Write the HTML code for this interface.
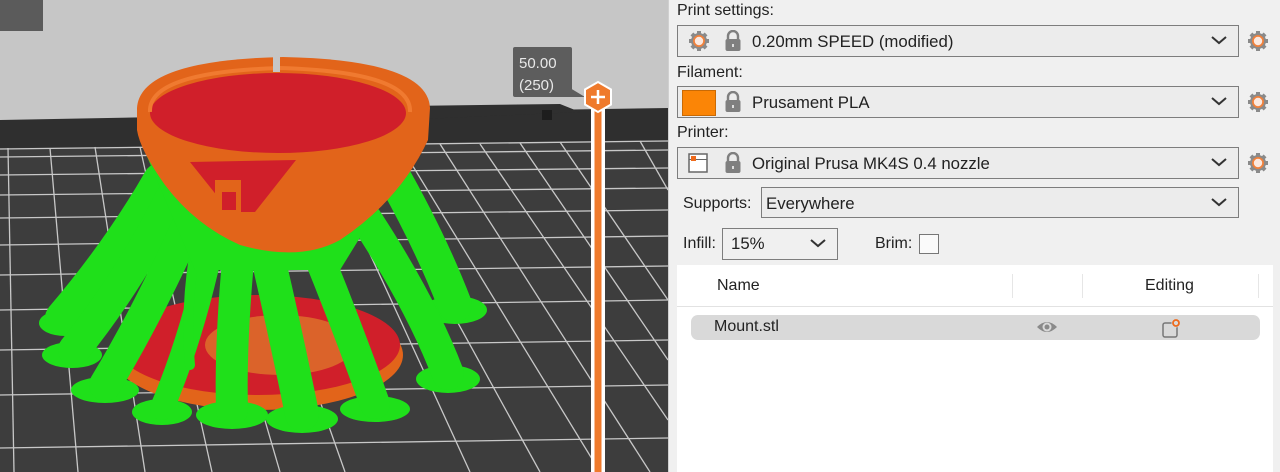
<!DOCTYPE html>
<html><head><meta charset="utf-8"><style>
body{margin:0;width:1280px;height:472px;overflow:hidden;font-family:"Liberation Sans",sans-serif;background:#f2f2f2;position:relative}
.v{position:absolute;left:0;top:0;width:668px;height:472px;overflow:hidden}
.p{position:absolute;left:668px;top:0;width:612px;height:472px;background:#f0f0f0;border-left:1px solid #d0d0d0}
.lbl{position:absolute;font-size:16px;color:#222}
.cb{position:absolute;height:30px;border:1px solid #7d7d7d;background:#ececec;box-sizing:border-box;font-size:16.8px;color:#222}
.cb span{position:absolute;top:6px}
.chev{position:absolute;right:10px;top:10px}
.gear{position:absolute}
</style></head><body>
<div class="v">
<svg width="668" height="472" viewBox="0 0 668 472">
<rect width="668" height="472" fill="#c6c6c6"/>
<rect x="0" y="0" width="43" height="31" fill="#5b5b5b"/>
<polygon points="0,120 540,110 668,108 668,472 0,472" fill="#2f2f2f"/>
<polygon points="0,148 668,140 668,472 0,472" fill="#3d3d3d"/>
<g stroke="#c8c8c8" stroke-width="1.3" fill="none">
<line x1="0" y1="149" x2="668" y2="141"/>
<line x1="0" y1="157" x2="668" y2="150"/>
<line x1="0" y1="175" x2="668" y2="168"/>
<line x1="0" y1="195" x2="668" y2="188"/>
<line x1="0" y1="218" x2="668" y2="210"/>
<line x1="0" y1="245" x2="668" y2="236"/>
<line x1="0" y1="275" x2="668" y2="266"/>
<line x1="0" y1="310" x2="668" y2="300"/>
<line x1="0" y1="350" x2="668" y2="340"/>
<line x1="0" y1="395" x2="668" y2="385"/>
<line x1="0" y1="448" x2="668" y2="438"/>
<line x1="8" y1="148" x2="14" y2="472"/>
<line x1="50" y1="148" x2="78" y2="472"/>
<line x1="95" y1="147" x2="145" y2="472"/>
<line x1="140" y1="147" x2="212" y2="472"/>
<line x1="185" y1="146" x2="280" y2="472"/>
<line x1="230" y1="146" x2="345" y2="472"/>
<line x1="320" y1="145" x2="470" y2="472"/>
<line x1="360" y1="145" x2="540" y2="472"/>
<line x1="400" y1="145" x2="600" y2="472"/>
<line x1="440" y1="144" x2="650" y2="472"/>
<line x1="480" y1="144" x2="668" y2="420"/>
<line x1="520" y1="143" x2="668" y2="360"/>
<line x1="560" y1="142" x2="668" y2="300"/>
<line x1="640" y1="141" x2="668" y2="190"/>
</g>
<polygon points="395,118 405,106 560,104 580,112 400,120" fill="#2f2f2f"/>
<rect x="542" y="110" width="10" height="10" fill="#1d1d1d"/>
<ellipse cx="258" cy="355" rx="145" ry="55" fill="#e2641a"/>
<ellipse cx="258" cy="345" rx="142" ry="50" fill="#d01f2a"/>
<ellipse cx="280" cy="345" rx="75" ry="30" fill="#e39a2a" opacity=".55"/>
<g fill="#1fe01a">
<ellipse cx="65" cy="323" rx="26" ry="13"/>
<ellipse cx="72" cy="355" rx="30" ry="13"/>
<ellipse cx="105" cy="390" rx="34" ry="13"/>
<ellipse cx="162" cy="412" rx="30" ry="13"/>
<ellipse cx="232" cy="415" rx="36" ry="14"/>
<ellipse cx="302" cy="419" rx="36" ry="14"/>
<ellipse cx="375" cy="409" rx="35" ry="13"/>
<ellipse cx="448" cy="379" rx="32" ry="14"/>
<ellipse cx="455" cy="310" rx="32" ry="14"/>
</g>
<g stroke="#1fe01a" stroke-linecap="round" fill="none">
<path d="M160,180 Q120,250 62,318" stroke-width="34"/>
<path d="M170,200 Q130,280 74,350" stroke-width="32"/>
<path d="M190,220 Q150,310 105,385" stroke-width="32"/>
<path d="M215,230 Q195,330 162,408" stroke-width="24"/>
<path d="M240,240 Q230,340 232,410" stroke-width="32"/>
<path d="M265,245 Q285,330 302,414" stroke-width="34"/>
<path d="M310,235 Q345,320 375,404" stroke-width="30"/>
<path d="M360,210 Q420,300 448,374" stroke-width="32"/>
<path d="M390,170 Q430,240 455,305" stroke-width="34"/>
<path d="M195,250 Q185,310 190,365" stroke-width="10"/>
</g>
<path d="M140,140 L195,270 L340,270 L420,140 Z" fill="#1fe01a"/>
<path d="M137,108 Q140,60 283,57 Q428,60 430,108 L428,140 Q400,200 340,240 Q300,262 240,245 Q195,225 165,185 Q140,150 137,130 Z" fill="#e2641a"/>
<ellipse cx="278" cy="113" rx="128" ry="40" fill="#d01f2a"/>
<path d="M150,112 Q148,72 280,68 Q412,72 410,112" stroke="#f07a30" stroke-width="4" fill="none"/>
<rect x="273" y="55" width="7" height="17" fill="#c6c6c6"/>
<polygon points="190,162 296,160 255,212 230,212" fill="#d01f2a"/>
<rect x="215" y="180" width="26" height="32" fill="#e2641a"/>
<rect x="222" y="192" width="14" height="18" fill="#d01f2a"/>
<rect x="513" y="47" width="59" height="50" rx="2" fill="#5d5d5d"/>
<polygon points="570,88 585,97 570,97" fill="#5d5d5d"/>
<text x="519" y="68" font-size="15" fill="#e8e8e8" font-family="Liberation Sans">50.00</text>
<text x="519" y="90" font-size="15" fill="#e8e8e8" font-family="Liberation Sans">(250)</text>
<rect x="591" y="100" width="14" height="372" fill="#fff"/>
<rect x="594.5" y="100" width="7" height="372" fill="#ef7a2c"/>
<polygon points="598,82 611,89.5 611,104.5 598,112 585,104.5 585,89.5" fill="#ef7a2c" stroke="#fff" stroke-width="2"/>
<path d="M598,90 v14 M591,97 h14" stroke="#fff" stroke-width="2.5"/>
</svg>
</div>
<div class="p">
<svg width="0" height="0" style="position:absolute"><defs>
<g id="gr"><g fill="#8a8a8a"><rect x="8" y="0" width="4" height="20"/><rect x="0" y="8" width="20" height="4"/><rect x="8" y="0" width="4" height="20" transform="rotate(45 10 10)"/><rect x="8" y="0" width="4" height="20" transform="rotate(-45 10 10)"/></g><circle cx="10" cy="10" r="8" fill="#8a8a8a"/><circle cx="10" cy="10" r="6" fill="#f0813c"/><circle cx="10" cy="10" r="4.2" fill="#fbe9e0"/></g>
<g id="lk"><path d="M4,9 V6 a5,5 0 0 1 10,0 V9" stroke="#7f7f7f" stroke-width="2.4" fill="none"/><rect x="1.5" y="9" width="15" height="12" rx="2" fill="#7f7f7f"/><rect x="8" y="14" width="2" height="3" fill="#ddd"/></g>
<path id="ch" d="M1,1 L8,7 L15,1" stroke="#333" stroke-width="2" fill="none"/>
</defs></svg>
<div class="lbl" style="left:8px;top:2px">Print settings:</div>
<div class="cb" style="left:8px;top:25px;width:562px;height:32px"><svg style="position:absolute;left:11px;top:5px" width="20" height="20"><use href="#gr"/></svg><svg style="position:absolute;left:46px;top:4px" width="18" height="22"><use href="#lk"/></svg><span style="left:74px">0.20mm SPEED (modified)</span><svg class="chev" width="17" height="9"><use href="#ch"/></svg></div>
<svg class="gear" style="left:579px;top:31px" width="20" height="20"><use href="#gr"/></svg>
<div class="lbl" style="left:8px;top:64px">Filament:</div>
<div class="cb" style="left:8px;top:86px;width:562px;height:32px"><div style="position:absolute;left:4px;top:3px;width:32px;height:24px;background:#fb8506;border:1px solid #c96a05"></div><svg style="position:absolute;left:46px;top:4px" width="18" height="22"><use href="#lk"/></svg><span style="left:74px">Prusament PLA</span><svg class="chev" width="17" height="9"><use href="#ch"/></svg></div>
<svg class="gear" style="left:579px;top:92px" width="20" height="20"><use href="#gr"/></svg>
<div class="lbl" style="left:8px;top:124px">Printer:</div>
<div class="cb" style="left:8px;top:147px;width:562px;height:32px"><svg style="position:absolute;left:10px;top:5px" width="20" height="20"><rect x="1" y="1" width="18" height="18" fill="#fff" stroke="#666" stroke-width="1.5"/><rect x="1" y="6" width="18" height="1" fill="#666"/><rect x="3" y="3" width="5" height="5" fill="#ee6a1c"/></svg><svg style="position:absolute;left:46px;top:4px" width="18" height="22"><use href="#lk"/></svg><span style="left:74px">Original Prusa MK4S 0.4 nozzle</span><svg class="chev" width="17" height="9"><use href="#ch"/></svg></div>
<svg class="gear" style="left:579px;top:153px" width="20" height="20"><use href="#gr"/></svg>
<div class="lbl" style="left:14px;top:195px">Supports:</div>
<div class="cb" style="left:92px;top:187px;width:478px;height:31px"><span style="left:4px">Everywhere</span><svg class="chev" width="17" height="9"><use href="#ch"/></svg></div>
<div class="lbl" style="left:14px;top:235px">Infill:</div>
<div class="cb" style="left:53px;top:228px;width:116px;height:32px;background:#f0f0f0"><span style="left:8px;top:5px">15%</span><svg class="chev" width="17" height="9"><use href="#ch"/></svg></div>
<div class="lbl" style="left:206px;top:235px">Brim:</div>
<div style="position:absolute;left:250px;top:234px;width:20px;height:20px;border:1px solid #777;background:#fafafa;box-sizing:border-box"></div>
<div style="position:absolute;left:8px;top:265px;width:596px;height:207px;background:#fff"></div>
<div style="position:absolute;left:8px;top:306px;width:596px;height:1px;background:#e2e2e2"></div>
<div style="position:absolute;left:343px;top:274px;width:1px;height:24px;background:#e6e6e6"></div>
<div style="position:absolute;left:413px;top:274px;width:1px;height:24px;background:#e6e6e6"></div>
<div style="position:absolute;left:589px;top:274px;width:1px;height:24px;background:#e6e6e6"></div>
<div class="lbl" style="left:48px;top:277px">Name</div>
<div class="lbl" style="left:476px;top:277px">Editing</div>
<div style="position:absolute;left:22px;top:315px;width:569px;height:25px;background:#d9d9d9;border-radius:7px"></div>
<div class="lbl" style="left:45px;top:318px">Mount.stl</div>
<svg style="position:absolute;left:367px;top:318px" width="22" height="18"><path d="M1,9 Q11,-1 21,9 Q11,19 1,9Z" fill="#8a8a8a"/><circle cx="11" cy="9" r="4.5" fill="#d9d9d9"/><circle cx="11" cy="9" r="2.5" fill="#8a8a8a"/></svg>
<svg style="position:absolute;left:492px;top:317px" width="22" height="22"><rect x="2" y="6" width="14" height="14" rx="2" fill="none" stroke="#777" stroke-width="1.5"/><circle cx="15" cy="6" r="4.5" fill="#d9d9d9"/><circle cx="15" cy="6" r="3" fill="none" stroke="#ee6a1c" stroke-width="1.8"/></svg>
</div>
</body></html>
